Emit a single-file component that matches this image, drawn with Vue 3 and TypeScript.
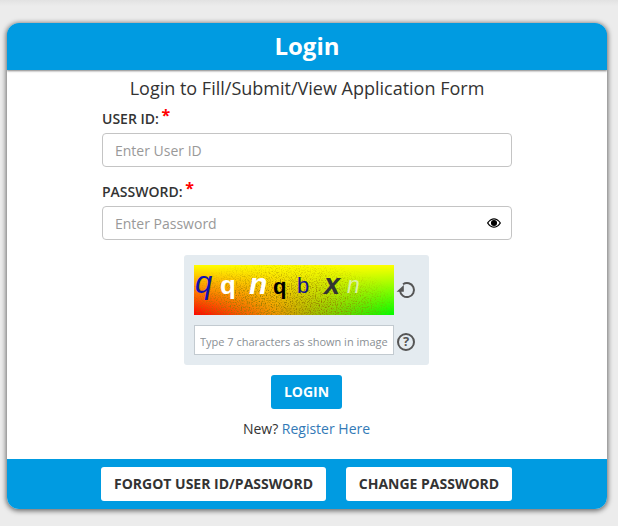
<template>
  <div class="page">
    <div class="card">
      <div class="card-head">Login</div>
      <div class="card-body">
        <h2 class="sub-title">Login to Fill/Submit/View Application Form</h2>
        <form class="login-form" @submit.prevent>
          <label class="field-label">USER ID: <span class="req">*</span></label>
          <input class="text-input" type="text" placeholder="Enter User ID" />

          <label class="field-label pass-label">PASSWORD: <span class="req">*</span></label>
          <div class="pass-wrap">
            <input class="text-input" :type="showPass ? 'text' : 'password'" placeholder="Enter Password" />
            <button class="eye-btn" type="button" aria-label="Show password" @click="showPass = !showPass">
              <svg width="14" height="14" viewBox="0 0 16 16" fill="#000">
                <path fill-rule="evenodd" d="M16 8s-3-5.5-8-5.5S0 8 0 8s3 5.5 8 5.5S16 8 16 8zM1.6 8a12 12 0 0 1 1.6-1.9C4.3 5 6 4 8 4s3.7 1 4.8 2.1A12 12 0 0 1 14.4 8a12 12 0 0 1-1.6 1.9C11.7 11 10 12 8 12s-3.7-1-4.8-2.1A12 12 0 0 1 1.6 8z" />
                <circle cx="8" cy="8" r="3.5" />
              </svg>
            </button>
          </div>

          <div class="captcha-box">
            <div class="captcha-row">
              <div class="captcha-img">
                <svg class="noise" width="200" height="50">
                  <filter id="grain">
                    <feTurbulence type="fractalNoise" baseFrequency="0.8" numOctaves="2" seed="4" />
                    <feColorMatrix values="0 0 0 0 0.3  0 0 0 0 0.2  0 0 0 0 0  0 0 0 3.2 -1.5" />
                  </filter>
                  <rect width="200" height="50" filter="url(#grain)" />
                </svg>
                <span
                  v-for="c in captcha"
                  :key="c.left"
                  class="captcha-char"
                  :style="{ left: c.left + 'px', top: c.top + 'px', fontSize: c.size + 'px', color: c.color, fontWeight: c.weight, fontStyle: c.italic ? 'italic' : 'normal' }"
                >{{ c.ch }}</span>
              </div>
              <svg class="side-icon" width="22" height="22" viewBox="0 0 22 22" fill="none">
                <path d="M8 5.3A7 7 0 1 1 5 11.5" stroke="#555" stroke-width="2" />
                <path d="M1.6 12.8 8.8 6v6.8z" fill="#555" />
              </svg>
            </div>
            <div class="captcha-row">
              <input class="captcha-input" type="text" placeholder="Type 7 characters as shown in image" />
              <svg class="side-icon help-icon" width="22" height="22" viewBox="0 0 22 22" fill="none">
                <circle cx="11" cy="11" r="8" stroke="#555" stroke-width="2" />
                <text x="11" y="15.2" text-anchor="middle" class="q-mark">?</text>
              </svg>
            </div>
          </div>

          <div class="submit-row">
            <button class="login-btn" type="submit">LOGIN</button>
          </div>
          <p class="new-line">New? <a href="#">Register Here</a></p>
        </form>
      </div>
      <div class="card-foot">
        <button class="foot-btn forgot" type="button">FORGOT USER ID/PASSWORD</button>
        <button class="foot-btn change" type="button">CHANGE PASSWORD</button>
      </div>
    </div>
  </div>
</template>

<script setup lang="ts">
import { ref } from 'vue'

interface CaptchaChar {
  ch: string
  left: number
  top: number
  size: number
  color: string
  weight: number
  italic: boolean
}

const showPass = ref(false)

// letters of the captcha picture, each one placed on its own
const captcha: CaptchaChar[] = [
  { ch: 'q', left: 1, top: 2, size: 31, color: '#1010b0', weight: 400, italic: true },
  { ch: 'q', left: 26, top: 7, size: 26, color: '#fff', weight: 700, italic: false },
  { ch: 'n', left: 55, top: 4, size: 30, color: '#fff', weight: 700, italic: true },
  { ch: 'q', left: 79, top: 11, size: 22, color: '#000', weight: 700, italic: false },
  { ch: 'b', left: 103, top: 10, size: 22, color: '#14148c', weight: 400, italic: false },
  { ch: 'x', left: 130, top: 5, size: 29, color: '#333', weight: 700, italic: true },
  { ch: 'n', left: 153, top: 9, size: 23, color: '#dcf0a8', weight: 400, italic: true },
]
</script>

<style>
html,
body {
  margin: 0;
  background: #ececec;
}
</style>

<style scoped>
.page {
  height: 526px;
  box-sizing: border-box;
  padding: 23px 11px 0 7px;
  overflow: hidden;
  font-family: "Open Sans", sans-serif;
  background: linear-gradient(to bottom, #e2e2e2 0, #ececec 6px);
}

.card {
  height: 486px;
  display: flex;
  flex-direction: column;
  border-radius: 12px;
  background: #fff;
  box-shadow: 0 1px 5px 1px rgba(0, 0, 0, 0.55);
  overflow: hidden;
}

.card-head {
  height: 47px;
  flex: none;
  background: #009be1;
  color: #fff;
  font-size: 24px;
  font-weight: 700;
  line-height: 46px;
  text-align: center;
  box-shadow: 0 1px 2px rgba(0, 0, 0, 0.5);
  position: relative;
}

.card-body {
  flex: 1;
}

.sub-title {
  margin: 6px 0 0;
  font-size: 18px;
  font-weight: 400;
  line-height: 25px;
  color: #333;
  text-align: center;
}

.login-form {
  width: 410px;
  margin: 0 auto;
}

.field-label {
  display: block;
  margin-top: 5px;
  height: 27px;
  font-size: 14px;
  font-weight: 600;
  line-height: 26px;
  color: #333;
}

.pass-label {
  margin-top: 12px;
}

.req {
  margin-left: -1px;
  color: #f00;
  font-size: 16px;
  font-weight: 700;
  line-height: 14px;
  vertical-align: 3px;
}

.text-input {
  display: block;
  width: 100%;
  height: 34px;
  box-sizing: border-box;
  padding: 0 12px;
  border: 1px solid #c4c4c4;
  border-radius: 4px;
  font: 400 14px "Open Sans", sans-serif;
  color: #333;
  outline: none;
}

.text-input::placeholder {
  color: #999;
  opacity: 1;
}

.pass-wrap {
  position: relative;
}

.eye-btn {
  position: absolute;
  right: 11px;
  top: 10px;
  padding: 0;
  border: 0;
  background: none;
  line-height: 0;
  cursor: pointer;
}

.captcha-box {
  width: 245px;
  height: 110px;
  box-sizing: border-box;
  margin: 15px 0 0 82px;
  padding: 10px;
  display: flex;
  flex-direction: column;
  gap: 10px;
  border-radius: 3px;
  background: #e4ebf0;
}

.captcha-row {
  display: flex;
  align-items: center;
}

.captcha-img {
  position: relative;
  flex: none;
  width: 200px;
  height: 50px;
  background:
    linear-gradient(to bottom, #ffff00 0, rgba(255, 255, 0, 0) 100%),
    linear-gradient(to right, #ff0000 0, #f09000 40%, #78d000 70%, #00ff00 100%);
}

.noise {
  position: absolute;
  left: 0;
  top: 0;
  -webkit-mask-image: radial-gradient(ellipse 60% 95% at 45% 85%, #000 35%, transparent 100%);
  mask-image: radial-gradient(ellipse 60% 95% at 45% 85%, #000 35%, transparent 100%);
}

.captcha-char {
  position: absolute;
  font-family: "Liberation Sans", sans-serif;
  line-height: 1;
}

.side-icon {
  flex: none;
  margin-left: 1px;
}

.help-icon {
  margin-top: 3px;
}

.captcha-input {
  flex: none;
  width: 200px;
  height: 30px;
  box-sizing: border-box;
  padding: 2px 5px 0;
  border: 1px solid #c2cad0;
  font: 400 11px "Open Sans", sans-serif;
  outline: none;
}

.captcha-input::placeholder {
  color: #8a8f94;
  opacity: 1;
}

.q-mark {
  font: 700 13px "Open Sans", sans-serif;
  fill: #555;
}

.submit-row {
  margin-top: 10px;
  padding-right: 1px;
  text-align: center;
}

.login-btn {
  width: 71px;
  height: 34px;
  padding: 0 0 2px;
  border: 0;
  border-radius: 3px;
  background: #009be1;
  color: #fff;
  font: 700 14px "Open Sans", sans-serif;
}

.new-line {
  margin: 10px 0 0;
  padding-right: 1px;
  font-size: 14px;
  line-height: 20px;
  color: #333;
  text-align: center;
}

.new-line a {
  color: #337ab7;
  text-decoration: none;
}

.card-foot {
  height: 50px;
  flex: none;
  display: flex;
  justify-content: center;
  align-items: center;
  gap: 20px;
  padding-right: 1px;
  background: #009be1;
}

.foot-btn {
  height: 34px;
  padding: 0 0 2px;
  border: 0;
  border-radius: 3px;
  background: #fff;
  color: #333;
  font: 700 14px "Open Sans", sans-serif;
}

.forgot {
  width: 225px;
}

.change {
  width: 166px;
}
</style>
